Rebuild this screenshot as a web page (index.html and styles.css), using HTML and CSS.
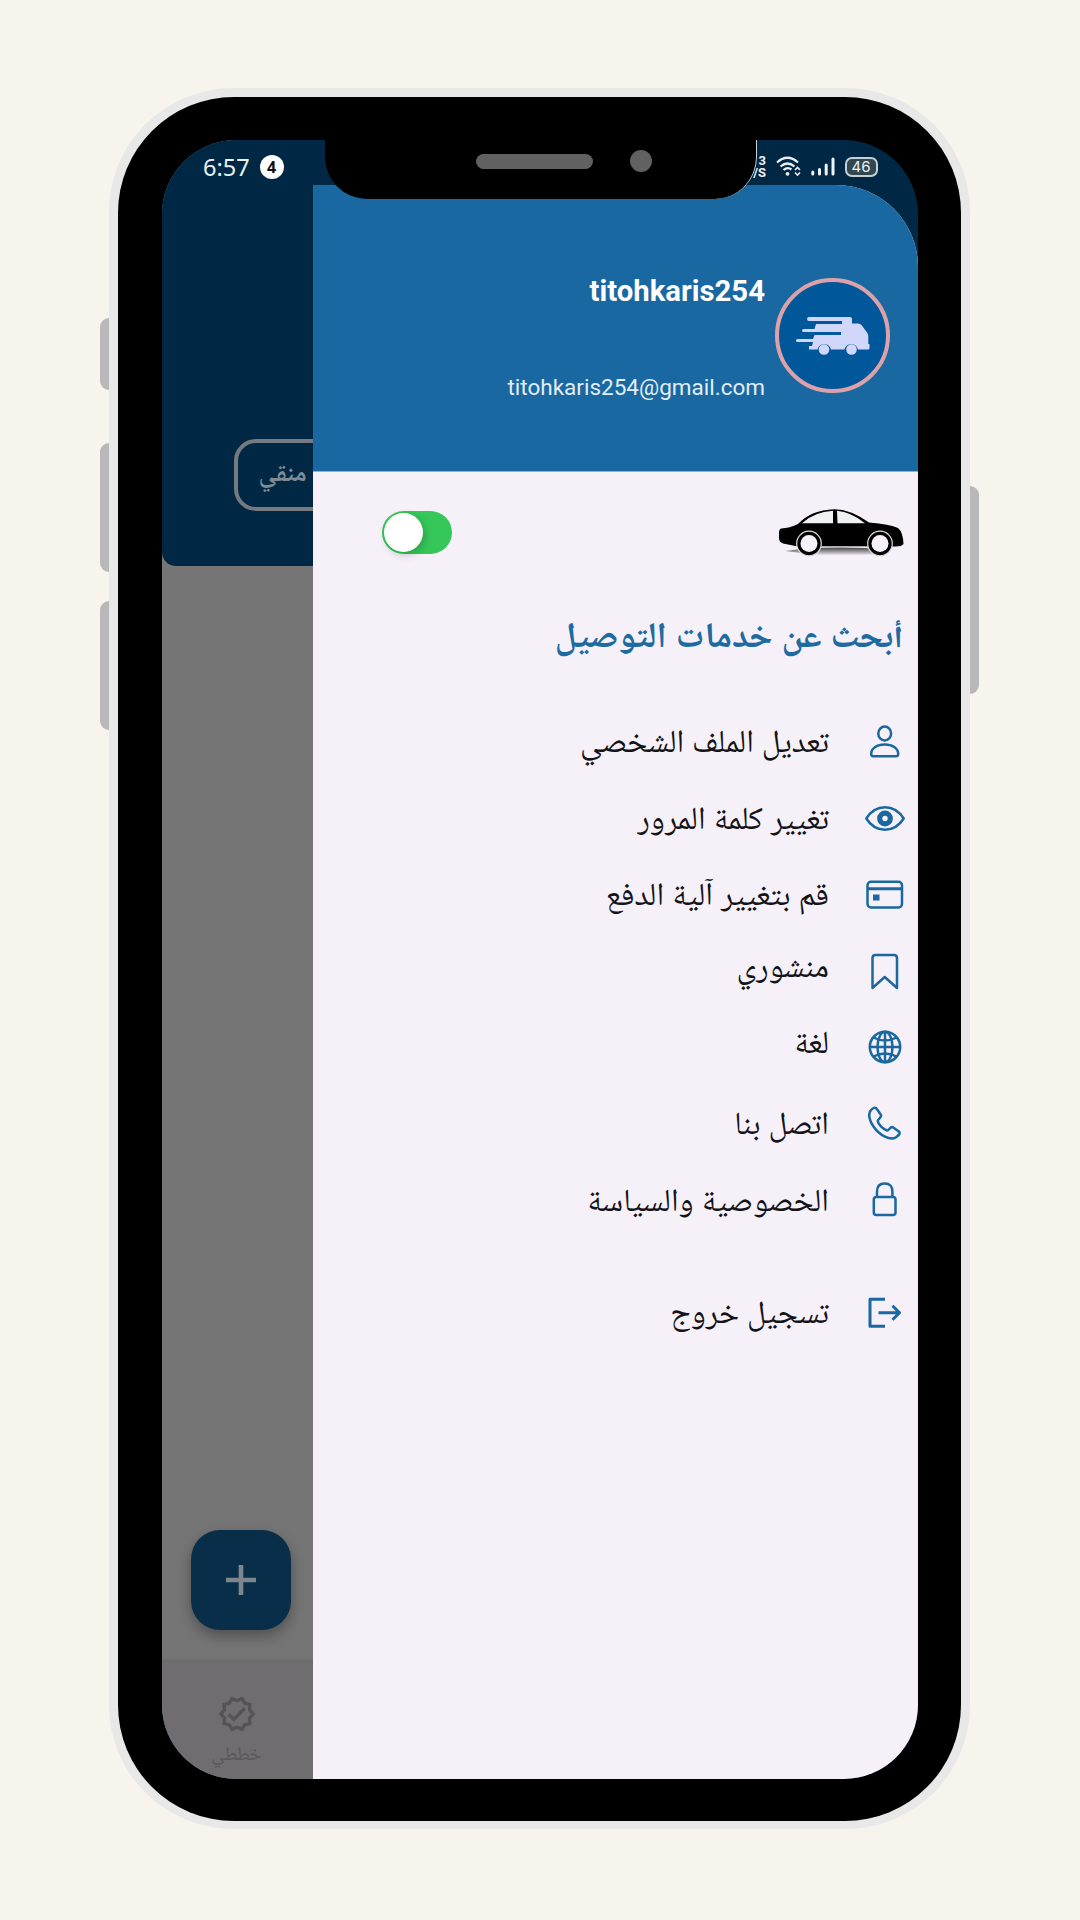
FILE: index.html
```html
<!DOCTYPE html>
<html lang="ar">
<head>
<meta charset="utf-8">
<title>القائمة</title>
<link rel="stylesheet" href="styles.css">
</head>
<body>
<main class="phone">
  <span class="key key-mute"></span>
  <span class="key key-up"></span>
  <span class="key key-down"></span>
  <span class="key key-power"></span>
  <div class="bezel">
    <div class="screen">
      <section class="page">
        <div class="hero"><div class="chip" dir="rtl"><span>منقي</span></div></div>
        <div class="body">
          <div class="fab"><svg width="30" height="30" viewBox="0 0 30 30"><path d="M15 0v30M0 15h30" stroke="#7c868e" stroke-width="4.6"/></svg></div>
        </div>
        <div class="tabbar">
          <svg width="40" height="40" viewBox="0 0 24 24" fill="#555455"><path d="M23 11.99l-2.44-2.79.34-3.69-3.61-.82L15.4 1.5 12 2.96 8.6 1.5 6.71 4.69 3.1 5.5l.34 3.7L1 11.99l2.44 2.79-.34 3.7 3.61.82 1.89 3.2 3.4-1.47 3.4 1.46 1.89-3.19 3.61-.82-.34-3.69L23 11.99zm-3.95 1.48l-.56.65.08.85.18 1.95-1.9.43-.84.19-.44.74-.99 1.68-1.78-.77-.8-.34-.79.34-1.78.77-.99-1.67-.44-.74-.84-.19-1.9-.43.18-1.96.08-.85-.56-.65L3.67 12l1.29-1.48.56-.65-.09-.86-.18-1.94 1.9-.43.84-.19.44-.74.99-1.68 1.78.77.8.34.79-.34 1.78-.77.99 1.68.44.74.84.19 1.9.43-.18 1.95-.08.85.56.65 1.29 1.47-1.28 1.48z"/><path d="M10.090 13.750l-2.320-2.330-1.480 1.490 3.800 3.810 7.340-7.360-1.480-1.490z"/></svg>
          <span class="tab-label">خططي</span>
        </div>
      </section>

      <aside class="drawer" dir="rtl">
        <header class="profile">
          <div class="avatar">
            <svg width="74" height="38" viewBox="0 0 74 38"><path fill="#d0d7fb" d="M13 0H54Q56 0 56 2V6.500H62Q64 6.500 65.500 8L71 15.500Q72.300 17 72.300 19V27H73.500V31Q73.500 32.500 72 32.500H62A7 7 0 0 0 48.500 32.500H35A7 7 0 0 0 21.500 32.500H13V29H16L17 25H1.500A1.500 1.500 0 0 1 1.500 22H17L18.500 18H45V15H7.500A1.500 1.500 0 0 1 7.500 12H18.500L20 7H46V4H13A2 2 0 0 1 13 0Z"/><circle cx="28" cy="32.500" r="5.300" fill="#d0d7fb"/><circle cx="55.500" cy="32.500" r="5.300" fill="#d0d7fb"/></svg>
          </div>
          <div class="who"><strong>titohkaris254</strong><span>titohkaris254@gmail.com</span></div>
        </header>
        <div class="mode">
          <svg width="126" height="50" viewBox="0 0 126 50">
            <defs><linearGradient id="shade" x1="0" y1="0" x2="0" y2="1"><stop offset="0" stop-color="#000" stop-opacity=".75"/><stop offset="1" stop-color="#000" stop-opacity="0"/></linearGradient></defs>
            <path d="M7 43Q60 36 110 42V45Q60 51 7 43Z" fill="url(#shade)"/>
            <path d="M3 20.500Q12 20 20 16Q33 2 56 1.200Q72 1 91 14.500Q112 16 120 20Q125 24 125.500 36Q124 38.500 117 38.500H20L5 35.500Q1 34 1 30V24Q1 21 3 20.500Z"/>
            <path d="M24 15.200Q36 4 55 2.800V15.200ZM59 2.800Q73 4 87 15.200H59.500Z" fill="#f0f1f3"/>
            <path d="M44 39H90" stroke="#ddd" stroke-width="1"/>
            <g stroke="#dedede" stroke-width="1.200"><circle cx="31" cy="35.500" r="12.300"/><circle cx="102" cy="35.500" r="12.300"/></g>
            <circle cx="31" cy="35.500" r="8.500" fill="#f7f2fa"/><circle cx="102" cy="35.500" r="8.500" fill="#f7f2fa"/>
          </svg>
          <div class="switch"><span></span></div>
        </div>
        <h1>أبحث عن خدمات التوصيل</h1>
        <nav class="menu">
          <a class="item"><svg viewBox="0 0 40 40"><ellipse cx="19.700" cy="11.500" rx="6.400" ry="7"/><path d="M6.200 32C6.200 26 12.200 22.500 19.700 22.500S33.200 26 33.200 32Q33.200 34.200 31.200 34.200H8.200Q6.200 34.200 6.200 32Z"/></svg><span>تعديل الملف الشخصي</span></a>
          <a class="item"><svg viewBox="0 0 40 40"><path d="M1.300 20.500C6 13 12.500 9.200 20 9.200S34 13 38.700 20.500C34 28 27.500 31.700 20 31.700S6 28 1.300 20.500Z"/><circle cx="20" cy="20.500" r="5.300" stroke-width="5.200"/></svg><span>تغيير كلمة المرور</span></a>
          <a class="item"><svg viewBox="0 0 40 40"><rect x="2.500" y="7.800" width="34.500" height="25.700" rx="3.500"/><path d="M3 14.800H37" stroke-width="3"/><rect x="8" y="20.500" width="6.500" height="6" fill="#1a689f" stroke="none"/></svg><span>قم بتغيير آلية الدفع</span></a>
          <a class="item raised"><svg viewBox="0 0 40 40"><path d="M7.500 37V7Q7.500 4 10.500 4H29Q32 4 32 7V37L19.700 26Z"/></svg><span>منشوري</span></a>
          <a class="item raised"><svg viewBox="0 0 40 40"><circle cx="20" cy="20" r="15.200"/><ellipse cx="20" cy="20" rx="7.500" ry="15.200"/><path d="M20 5V35M5 20H35M8.500 10.500Q20 16.500 31.500 10.500M8.500 29.500Q20 23.500 31.500 29.500"/></svg><span>لغة</span></a>
          <a class="item"><svg viewBox="0 0 40 40"><path d="M5 7.500C7.500 3.500 10.500 2.500 12.200 5.500L16 11C17 13.500 12.700 15 12.700 17C13.500 21 18 25 22 26.500C24.300 26.500 25 22.500 27.500 23L33.500 27.300C36 29.500 34 31 31 33.200C25.500 37 14.500 31.500 8.500 22.500C4 16 3.500 11 5 7.500Z"/></svg><span>اتصل بنا</span></a>
          <a class="item"><svg viewBox="0 0 40 40"><rect x="8.800" y="17" width="21.700" height="18" rx="2.500"/><path d="M12 17V11.500Q12 3.500 19.700 3.500T27.400 11.500V17"/></svg><span>الخصوصية والسياسة</span></a>
          <a class="item logout"><svg viewBox="0 0 40 40"><path d="M20 6.200H5V33.300H20M13.500 19.800H34M27.500 12.800L34.500 19.800L27.500 26.800" stroke-width="3"/></svg><span>تسجيل خروج</span></a>
        </nav>
      </aside>

      <div class="status">
        <div class="clock"><span>6:57</span><b>4</b></div>
        <div class="signals">
          <div class="speed"><span>3</span><span>/S</span></div>
          <svg class="wifi" width="26" height="21" viewBox="0 0 26 21" fill="none" stroke="#e8f0f5" stroke-width="2.200"><path d="M1 6.500Q11.500-3 22 6.500M4.500 10.500Q11.500 4.500 18.500 10.500M7.500 14Q11.500 10.500 15.500 13.500"/><circle cx="11.500" cy="17.800" r="1.900" fill="#e8f0f5" stroke="none"/><path d="M19 14L21.500 11.500L24 14M19 16.500L21.500 19L24 16.500" stroke-width="1.600"/></svg>
          <svg width="24" height="19" viewBox="0 0 24 19" stroke="#eef4f8" stroke-width="3" stroke-linecap="round"><path d="M1.800 15V17M8.500 12.500V17M15.200 8V17M22 2V17"/></svg>
          <span class="battery">46</span>
        </div>
      </div>
      <div class="notch"><span class="speaker"></span><span class="camera"></span></div>
    </div>
  </div>
</main>
</body>
</html>
```
FILE: styles.css
```css
* { box-sizing: border-box; }

body {
  margin: 0;
  width: 1080px;
  height: 1920px;
  padding: 88px 0 0 109px;
  overflow: hidden;
  background: #f7f4ed;
  font-family: Roboto, "Noto Naskh Arabic UI", "Noto Naskh Arabic", "DejaVu Sans", sans-serif;
}

.phone {
  position: relative;
  width: 861px;
  height: 1740.500px;
  padding: 8.500px;
  border-radius: 124px;
  background: #e8e8e8;
}

.key {
  position: absolute;
  left: -9px;
  width: 9px;
  border-radius: 9px 0 0 9px;
  background: #b8b8b8;
}
.key-mute { top: 230px; height: 72px; }
.key-up { top: 355px; height: 129px; }
.key-down { top: 513px; height: 129px; }
.key-power { top: 398px; left: 861px; height: 208px; border-radius: 0 9px 9px 0; }

.bezel {
  width: 843.500px;
  height: 1724px;
  padding: 43.500px 44px;
  border-radius: 116px;
  background: #000;
}

.screen {
  position: relative;
  width: 756.500px;
  height: 1639px;
  border-radius: 74px;
  overflow: hidden;
  background: #002844;
}

.page { display: flex; flex-direction: column; width: 152px; height: 100%; background: #757575; overflow: hidden; }
.hero { height: 426px; padding: 299px 0 0 72px; border-bottom-left-radius: 14px; background: #002844; }
.chip {
  width: 160px;
  height: 72px;
  padding: 19px 0 0 21px;
  border: 4px solid #747a80;
  border-radius: 22px;
  color: #7f8b94;
  font-size: 25.800px;
  font-weight: 700;
  line-height: 28px;
  text-align: left;
}
.chip span { display: inline-block; }
.body { display: flex; flex: 1; align-items: flex-end; padding: 0 0 29px 29px; }
.fab {
  display: grid;
  place-items: center;
  width: 100px;
  height: 100px;
  border-radius: 29px;
  background: #092e49;
  box-shadow: 0 6px 14px rgba(0, 0, 0, .32);
}
.tabbar { display: flex; flex-direction: column; align-items: center; height: 120px; padding: 35px 2px 0 0; background: #706d71; }
.tab-label { margin-top: 11px; color: #59585a; font-size: 19.500px; line-height: 24px; }

.drawer {
  position: absolute;
  top: 45px;
  left: 151.500px;
  width: 605px;
  bottom: 0;
  border-top-right-radius: 82px;
  overflow: hidden;
  background: #f6f1f9;
}
.profile { display: flex; height: 287px; padding: 93px 28px 0 0; gap: 10px; background: #1968a1; border-bottom: 1px solid #8fb0cf; }
.avatar {
  display: grid;
  place-items: center;
  width: 115px;
  height: 115px;
  border: 4px solid #dda1aa;
  border-radius: 50%;
  background: #005799;
}
.who { display: flex; flex-direction: column; gap: 68px; direction: ltr; text-align: right; color: #fff; }
.who strong { margin-top: -1px; font-size: 29.300px; font-weight: 700; line-height: 28px; }
.who span { font-size: 22.500px; line-height: 28px; color: #e2edf5; }

.mode { display: flex; align-items: center; justify-content: space-between; height: 121px; padding: 0 14px 0 69px; }
.switch { width: 70px; height: 43px; padding: 2px; border-radius: 22px; background: #35c759; direction: ltr; }
.switch span { display: block; width: 39px; height: 39px; border-radius: 50%; background: #fff; box-shadow: 2px 3px 8px rgba(0, 0, 0, .2); }

h1 { margin: 0; height: 110.500px; padding: 23px 14.500px 0 0; color: #1f6ba1; font-size: 35.900px; line-height: 48px; font-weight: 700; white-space: nowrap; }

.menu { display: flex; flex-direction: column; }
.item { display: flex; align-items: center; height: 76.400px; padding-right: 13.500px; gap: 35.500px; color: #141318; font-size: 32.100px; line-height: 40px; white-space: nowrap; }
.item svg { width: 40px; height: 40px; fill: none; stroke: #1a689f; stroke-width: 2.500; stroke-linejoin: round; }
.item span { padding-top: 7px; }
.item.raised span { padding: 0 0 2px; }
.item.logout { margin-top: 37px; }
.item.logout span { padding-top: 5px; }

.status { position: absolute; inset: 0 0 auto; display: flex; justify-content: space-between; height: 45px; padding: 8px 40.500px 0 41.500px; color: #eaf2f7; }
.clock { display: flex; align-items: center; gap: 10px; font: 23.500px "Noto Sans", sans-serif; }
.clock b { display: grid; place-items: center; width: 24px; height: 24px; border-radius: 50%; background: #fff; color: #111; font-size: 16px; }
.signals { display: flex; align-items: center; gap: 9.500px; }
.speed { display: flex; flex-direction: column; align-items: flex-end; font: 700 13px/12px Roboto, sans-serif; }
.battery { display: grid; place-items: center; width: 33px; height: 20px; border: 2px solid #c5d0d5; border-radius: 7px; background: #34474f; font: 15px/15px Inter, sans-serif; }

.notch {
  position: absolute;
  top: 0;
  left: 163px;
  display: flex;
  align-items: flex-start;
  gap: 37px;
  width: 432px;
  height: 59px;
  padding: 10px 0 0 151.500px;
  border-right: 1px solid #c9d0d5;
  border-radius: 0 0 42px 42px;
  background: #000;
}
.speaker { width: 117px; height: 15px; margin-top: 4px; border-radius: 8px; background: #616161; }
.camera { width: 22px; height: 22px; border-radius: 50%; background: #616161; }
```
